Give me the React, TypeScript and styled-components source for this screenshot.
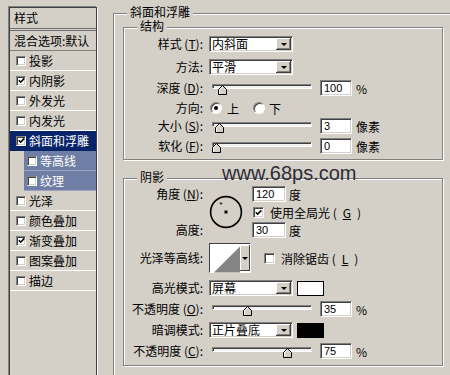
import styled, { createGlobalStyle } from "styled-components"

const GlobalStyle = createGlobalStyle`
  html, body {
    margin: 0;
    padding: 0;
    background: #d4d0c8;
  }
  body {
    font-family: "Noto Sans CJK SC", "Liberation Sans", sans-serif;
    font-size: 12px;
    color: #000;
  }
`

const Window = styled.div`
  position: relative;
  width: 450px;
  height: 375px;
  overflow: hidden;
  display: flex;
  align-items: flex-start;
  background: #d4d0c8;
`

/* ---- left list of effects ---- */

const StylePanel = styled.div`
  flex: none;
  width: 88px;
  height: 380px;
  margin: 7px 0 0 9px;
  box-sizing: border-box;
  border: 1px solid #404040;
  box-shadow: -1px -1px 0 #808080, 1px 1px 0 #fff;
`

const PanelHeader = styled.div`
  height: 20px;
  line-height: 20px;
  padding-left: 4px;
  border-bottom: 3px double #707070;
`

const BlendRow = styled.div`
  height: 19px;
  line-height: 19px;
  padding-left: 4px;
  white-space: nowrap;
  border-bottom: 1px solid #808080;
`

const LayerRow = styled.div<{ $active?: boolean; $sub?: boolean }>`
  display: flex;
  align-items: center;
  gap: 3px;
  height: 19px;
  margin-left: ${(p) => (p.$sub ? 14 : 0)}px;
  padding-left: ${(p) => (p.$sub ? 3 : 6)}px;
  white-space: nowrap;
  background: ${(p) => (p.$active ? "#0a246a" : p.$sub ? "#6f7ea4" : "transparent")};
  color: ${(p) => (p.$active || p.$sub ? "#fff" : "#000")};
  border-bottom: 1px solid ${(p) => (p.$active ? "#0a246a" : p.$sub ? "#9ba5c2" : "#fff")};
`

const Check = styled.span<{ $size?: number }>`
  flex: none;
  width: ${(p) => p.$size ?? 11}px;
  height: ${(p) => p.$size ?? 11}px;
  box-sizing: border-box;
  display: flex;
  align-items: center;
  justify-content: center;
  background: #fff;
  border: 1px solid;
  border-color: #808080 #fff #fff #808080;
  box-shadow: inset 1px 1px 0 #404040, inset -1px -1px 0 #d4d0c8;

  svg {
    width: 7px;
    height: 7px;
  }
`

/* ---- right side group boxes ---- */

const Settings = styled.div`
  flex: none;
  margin-left: 16px;
`

const Group = styled.fieldset<{ $w: number; $ml?: number; $mt?: number; $pb?: number }>`
  width: ${(p) => p.$w}px;
  box-sizing: border-box;
  min-width: 0;
  margin: ${(p) => p.$mt ?? 0}px 0 0 ${(p) => p.$ml ?? 0}px;
  padding: 0 0 ${(p) => p.$pb ?? 0}px;
  border: 1px solid #808080;
  box-shadow: inset 1px 1px 0 #fff, 1px 1px 0 #fff;
`

const Legend = styled.legend`
  margin-left: 13px;
  padding: 0 3px;
  height: 14px;
  line-height: 14px;
  font-family: "Liberation Sans", "Noto Sans CJK SC", sans-serif;
  background: #d4d0c8;
`

const Row = styled.div<{ $mt?: number; $h?: number }>`
  display: flex;
  align-items: center;
  height: ${(p) => p.$h ?? 16}px;
  margin-top: ${(p) => p.$mt ?? 0}px;
  white-space: nowrap;
`

const Label = styled.span`
  flex: none;
  width: 79px;
  margin-right: 6px;
  text-align: right;
  line-height: 16px;
  white-space: nowrap;
`

const Sunken = styled.span`
  flex: none;
  box-sizing: border-box;
  background: #fff;
  border: 1px solid;
  border-color: #808080 #fff #fff #808080;
  box-shadow: inset 1px 1px 0 #404040, inset -1px -1px 0 #d4d0c8;
`

const Select = styled(Sunken)`
  display: flex;
  align-items: center;
  width: 84px;
  height: 16px;
  padding: 1px 1px 1px 2px;
`

const SelectText = styled.span`
  flex: 1;
  line-height: 14px;
`

const DropButton = styled.span`
  flex: none;
  width: 15px;
  height: 12px;
  display: flex;
  align-items: center;
  justify-content: center;
  background: #d4d0c8;
  box-shadow: inset -1px -1px 0 #404040, inset 1px 1px 0 #fff, inset -2px -2px 0 #808080;

  &::after {
    content: "";
    border-left: 3px solid transparent;
    border-right: 3px solid transparent;
    border-top: 3px solid #000;
  }
`

const NumberBox = styled(Sunken)<{ $w?: number }>`
  width: ${(p) => p.$w ?? 32}px;
  height: 16px;
  padding-left: 3px;
  font-family: "Liberation Sans", Arial, sans-serif;
  font-size: 11px;
  line-height: 14px;
`

const Unit = styled.span<{ $ml?: number }>`
  margin-left: ${(p) => p.$ml ?? 4}px;
  font-size: 12px;
`

const Slider = styled.div`
  position: relative;
  flex: none;
  width: 100px;
  height: 16px;
  margin: 0 8px 0 3px;
  padding-top: 4px;
  box-sizing: border-box;
`

const Track = styled.div`
  height: 5px;
  box-sizing: border-box;
  background: #f2f2f0;
  border: 1px solid;
  border-color: #808080 #fff #fff #808080;
  box-shadow: inset 1px 1px 0 #404040;
`

const Thumb = styled.svg`
  position: absolute;
  top: 5px;
  width: 9px;
  height: 10px;
`

const Swatch = styled.span<{ $color: string }>`
  flex: none;
  width: 27px;
  height: 15px;
  margin-left: 4px;
  box-sizing: border-box;
  border: 1px solid #000;
  background: ${(p) => p.$color};
`

const Radio = styled.span<{ $on?: boolean }>`
  flex: none;
  width: 12px;
  height: 12px;
  box-sizing: border-box;
  border-radius: 50%;
  display: flex;
  align-items: center;
  justify-content: center;
  background: #fff;
  border: 1px solid;
  border-color: #808080 #fff #fff #808080;
  box-shadow: inset 1px 1px 0 #404040;

  &::after {
    content: "";
    width: 4px;
    height: 4px;
    border-radius: 50%;
    background: ${(p) => (p.$on ? "#000" : "transparent")};
  }
`

const Option = styled.span<{ $ml?: number; $gap?: number }>`
  display: flex;
  align-items: center;
  gap: ${(p) => p.$gap ?? 5}px;
  margin-left: ${(p) => p.$ml ?? 0}px;
`

const AngleBlock = styled.div`
  display: grid;
  grid-template-columns: 79px 37px auto;
  grid-template-rows: 16px 16px 16px;
  column-gap: 6px;
  row-gap: 2px;
  margin-top: 1px;
`

const GridLabel = styled(Label)<{ $row: number }>`
  grid-column: 1;
  grid-row: ${(p) => p.$row};
  margin-right: 0;
`

const Dial = styled.svg`
  grid-column: 2;
  grid-row: 1 / 4;
  align-self: center;
  width: 37px;
  height: 34px;
`

const GridCell = styled.div<{ $row: number }>`
  grid-column: 3;
  grid-row: ${(p) => p.$row};
  display: flex;
  align-items: center;
  white-space: nowrap;
`

const ContourPicker = styled(Sunken)`
  display: flex;
  width: 42px;
  height: 30px;
  padding: 1px 0 1px 1px;
  border-color: #404040 #fff #fff #404040;
  box-shadow: none;
  background: #fff;
`

const ContourButton = styled.span`
  flex: none;
  width: 10px;
  display: flex;
  align-items: center;
  justify-content: center;
  background: #d4d0c8;
  box-shadow: inset -1px -1px 0 #404040, inset 1px 1px 0 #fff;

  &::after {
    content: "";
    border-left: 3px solid transparent;
    border-right: 3px solid transparent;
    border-top: 3px solid #000;
  }
`

const Watermark = styled.div`
  position: absolute;
  left: 222px;
  top: 163px;
  font-family: "Liberation Sans", Arial, sans-serif;
  font-size: 20px;
  line-height: 20px;
  color: #2c2c36;
  white-space: nowrap;
  pointer-events: none;
`

/* ---- small pieces ---- */

const Tick = () => (
  <svg viewBox="0 0 7 7">
    <polyline points="0.8,3.2 2.7,5.2 6.3,1.4" fill="none" stroke="#000" strokeWidth="1.6" />
  </svg>
)

const CheckBox = ({ on, size }: { on?: boolean; size?: number }) => (
  <Check $size={size}>{on && <Tick />}</Check>
)

const SliderControl = ({ pos }: { pos: number }) => (
  <Slider>
    <Track />
    <Thumb viewBox="0 0 9 10" style={{ left: Math.round(pos * 91) }}>
      <polygon points="0.5,4.5 4.5,0.5 8.5,4.5 8.5,9.5 0.5,9.5" fill="#d4d0c8" stroke="#000" />
      <polyline points="1.5,9 1.5,4.9 4.5,1.9" fill="none" stroke="#fff" />
    </Thumb>
  </Slider>
)

const DropDown = ({ value }: { value: string }) => (
  <Select>
    <SelectText>{value}</SelectText>
    <DropButton />
  </Select>
)

const layers = [
  { name: "投影", on: false },
  { name: "内阴影", on: true },
  { name: "外发光", on: false },
  { name: "内发光", on: false },
  { name: "斜面和浮雕", on: true, active: true },
  { name: "等高线", on: false, sub: true },
  { name: "纹理", on: false, sub: true },
  { name: "光泽", on: false },
  { name: "颜色叠加", on: false },
  { name: "渐变叠加", on: true },
  { name: "图案叠加", on: false },
  { name: "描边", on: false },
]

export default function App() {
  return (
    <Window>
      <GlobalStyle />
      <StylePanel>
        <PanelHeader>样式</PanelHeader>
        <BlendRow>混合选项:默认</BlendRow>
        {layers.map((l) => (
          <LayerRow key={l.name} $active={l.active} $sub={l.sub}>
            <CheckBox on={l.on} size={10} />
            {l.name}
          </LayerRow>
        ))}
      </StylePanel>

      <Settings>
        <Group $w={345} $mt={6} $pb={30}>
          <Legend>斜面和浮雕</Legend>

          <Group $w={320} $ml={9} $pb={5}>
            <Legend>结构</Legend>
            <Row $mt={2}>
              <Label>样式 (<u>T</u>):</Label>
              <DropDown value="内斜面" />
            </Row>
            <Row $mt={7}>
              <Label>方法:</Label>
              <DropDown value="平滑" />
            </Row>
            <Row $mt={5}>
              <Label>深度 (<u>D</u>):</Label>
              <SliderControl pos={0.065} />
              <NumberBox>100</NumberBox>
              <Unit>%</Unit>
            </Row>
            <Row $mt={4}>
              <Label>方向:</Label>
              <Option $ml={1}>
                <Radio $on />
                上
              </Option>
              <Option $ml={14} $gap={4}>
                <Radio />
                下
              </Option>
            </Row>
            <Row $mt={2}>
              <Label>大小 (<u>S</u>):</Label>
              <SliderControl pos={0.03} />
              <NumberBox>3</NumberBox>
              <Unit>像素</Unit>
            </Row>
            <Row $mt={4}>
              <Label>软化 (<u>F</u>):</Label>
              <SliderControl pos={0} />
              <NumberBox>0</NumberBox>
              <Unit>像素</Unit>
            </Row>
          </Group>

          <Group $w={320} $ml={9} $mt={11} $pb={6}>
            <Legend>阴影</Legend>
            <AngleBlock>
              <GridLabel $row={1}>角度 (<u>N</u>):</GridLabel>
              <GridLabel $row={3}>高度:</GridLabel>
              <Dial viewBox="0 0 37 34">
                <circle cx="17" cy="17" r="15.4" fill="none" stroke="#000" strokeWidth="1.6" />
                <rect x="15.5" y="15.5" width="3" height="3" fill="#000" />
                <line x1="10.5" y1="8.5" x2="13.5" y2="8.5" stroke="#222" strokeWidth="0.8" />
                <line x1="12" y1="7" x2="12" y2="10" stroke="#222" strokeWidth="0.8" />
              </Dial>
              <GridCell $row={1}>
                <NumberBox $w={34}>120</NumberBox>
                <Unit $ml={3}>度</Unit>
              </GridCell>
              <GridCell $row={2}>
                <Option $ml={1} $gap={6}>
                  <CheckBox on />
                  使用全局光 (<u>G</u>)
                </Option>
              </GridCell>
              <GridCell $row={3}>
                <NumberBox $w={34}>30</NumberBox>
                <Unit $ml={3}>度</Unit>
              </GridCell>
            </AngleBlock>

            <Row $mt={5} $h={30}>
              <Label>光泽等高线:</Label>
              <ContourPicker>
                <svg width="30" height="28" viewBox="0 0 30 28">
                  <rect width="30" height="28" fill="#fff" />
                  <polygon points="3,28 30,1 30,28" fill="#848484" />
                </svg>
                <ContourButton />
              </ContourPicker>
              <Option $ml={13} $gap={6}>
                <CheckBox />
                消除锯齿 (<u>L</u>)
              </Option>
            </Row>
            <Row $mt={7}>
              <Label>高光模式:</Label>
              <DropDown value="屏幕" />
              <Swatch $color="#fff" />
            </Row>
            <Row $mt={5}>
              <Label>不透明度 (<u>O</u>):</Label>
              <SliderControl pos={0.34} />
              <NumberBox>35</NumberBox>
              <Unit>%</Unit>
            </Row>
            <Row $mt={5}>
              <Label>暗调模式:</Label>
              <DropDown value="正片叠底" />
              <Swatch $color="#000" />
            </Row>
            <Row $mt={5}>
              <Label>不透明度 (<u>C</u>):</Label>
              <SliderControl pos={0.78} />
              <NumberBox>75</NumberBox>
              <Unit>%</Unit>
            </Row>
          </Group>
        </Group>
      </Settings>

      <Watermark>www.68ps.com</Watermark>
    </Window>
  )
}
